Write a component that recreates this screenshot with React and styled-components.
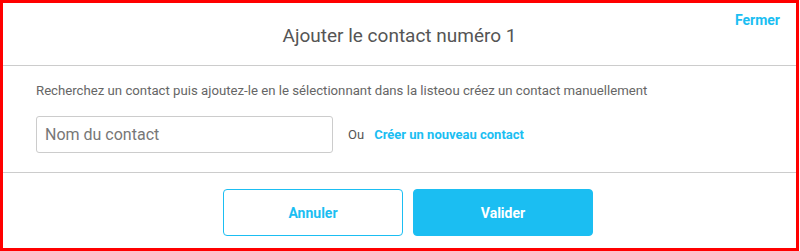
import styled, { createGlobalStyle } from "styled-components"

const GlobalStyle = createGlobalStyle`
  html, body {
    margin: 0;
    padding: 0;
    background: #ffffff;
  }
  * {
    box-sizing: border-box;
  }
`;

const Frame = styled.div`
  width: 799px;
  height: 251px;
  border: 3px solid #ff0000;
  background: #ffffff;
  display: flex;
  flex-direction: column;
  font-family: Roboto, "Open Sans", sans-serif;
`;

const Header = styled.header`
  position: relative;
  height: 63px;
  display: flex;
  align-items: center;
  justify-content: center;
  border-bottom: 1px solid #cccccc;
`;

const Title = styled.h1`
  margin: 0;
  padding-top: 2px;
  font-size: 19px;
  font-weight: normal;
  color: #555555;
`;

const CloseLink = styled.a`
  position: absolute;
  top: 9px;
  right: 16px;
  font-size: 14px;
  font-weight: bold;
  color: #1bbef2;
  cursor: pointer;
`;

const Body = styled.section`
  height: 107px;
  padding: 17px 33px 0;
  border-bottom: 1px solid #cccccc;
  display: flex;
  flex-direction: column;
  gap: 18px;
`;

const Hint = styled.p`
  margin: 0;
  font-size: 13.2px;
  color: #666666;
`;

const Row = styled.div`
  display: flex;
  align-items: center;
`;

const NameInput = styled.input`
  width: 297px;
  height: 37px;
  padding: 0 8px;
  border: 1px solid #cccccc;
  border-radius: 3px;
  font-family: inherit;
  font-size: 16px;
  color: #555555;

  &::placeholder {
    color: #777777;
  }
`;

const Or = styled.span`
  margin-left: 15px;
  font-size: 13px;
  color: #555555;
`;

const CreateLink = styled.a`
  margin-left: 10px;
  font-size: 13px;
  font-weight: bold;
  color: #1bbef2;
  cursor: pointer;
`;

const Footer = styled.footer`
  flex: 1;
  display: flex;
  justify-content: center;
  padding: 16px 0 0 17px;
  gap: 10px;
`;

const Button = styled.button`
  width: 180px;
  height: 47px;
  border-radius: 4px;
  border: 1px solid #1bbef2;
  background: ${p => (p.$primary ? "#1bbef2" : "#ffffff")};
  color: ${p => (p.$primary ? "#ffffff" : "#1bbef2")};
  font-family: inherit;
  font-size: 14px;
  font-weight: bold;
  cursor: pointer;
`;

const App = () => {
  return (
    <>
      <GlobalStyle />
      <Frame>
        <Header>
          <Title>Ajouter le contact numéro 1</Title>
          <CloseLink>Fermer</CloseLink>
        </Header>
        <Body>
          <Hint>
            Recherchez un contact puis ajoutez-le en le sélectionnant dans la listeou créez un contact manuellement
          </Hint>
          <Row>
            <NameInput placeholder="Nom du contact" />
            <Or>Ou</Or>
            <CreateLink>Créer un nouveau contact</CreateLink>
          </Row>
        </Body>
        <Footer>
          <Button>Annuler</Button>
          <Button $primary>Valider</Button>
        </Footer>
      </Frame>
    </>
  )
}

export default App
